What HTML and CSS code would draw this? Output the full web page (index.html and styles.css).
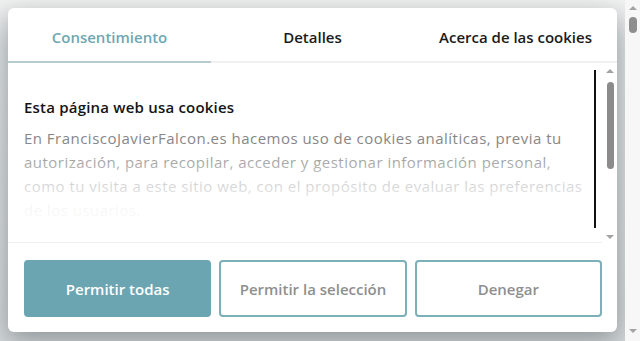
FILE: index.html
```html
<!DOCTYPE html>
<html lang="es">
<head>
<meta charset="utf-8">
<title>Cookies</title>
<link rel="stylesheet" href="styles.css">
</head>
<body>
<div class="stage">
  <div class="modal">
    <div class="tabs">
      <div class="tab active">Consentimiento</div>
      <div class="tab">Detalles</div>
      <div class="tab">Acerca de las cookies</div>
    </div>
    <div class="content">
      <div class="scroll">
        <div class="text">
          <h2 class="title">Esta página web usa cookies</h2>
          <p class="body">En FranciscoJavierFalcon.es hacemos uso de cookies analíticas, previa tu autorización, para recopilar, acceder y gestionar información personal, como tu visita a este sitio web, con el propósito de evaluar las preferencias de los usuarios.</p>
        </div>
        <div class="fade"></div>
        <div class="focusline"></div>
      </div>
      <div class="vbar">
        <span class="arrow up"></span>
        <span class="thumb"></span>
        <span class="spacer"></span>
        <span class="arrow down"></span>
      </div>
    </div>
    <div class="actions">
      <button class="btn primary">Permitir todas</button>
      <button class="btn outline">Permitir la selección</button>
      <button class="btn outline">Denegar</button>
    </div>
  </div>
</div>
<div class="pagebar">
  <span class="arrow up"></span>
  <span class="pthumb"></span>
  <span class="spacer"></span>
  <span class="arrow down"></span>
</div>
</body>
</html>
```

FILE: styles.css
```css
* { box-sizing: border-box; }
html, body { margin: 0; height: 341px; overflow: hidden; }
body {
  display: flex;
  font-family: "Open Sans", "Noto Sans", sans-serif;
  background: #f6f6f6;
}
.stage {
  flex: 1;
  padding: 8px;
  background: linear-gradient(to bottom, #f2f2f2 0, #dde1e3 50px, #d3d7d9 100%);
}
.modal {
  width: 609px;
  height: 324px;
  background: #fff;
  border-radius: 6px;
  box-shadow: 0 8px 26px rgba(30, 40, 45, 0.38);
  display: flex;
  flex-direction: column;
  overflow: hidden;
}
.tabs {
  display: flex;
  height: 55px;
  flex: none;
}
.tab {
  flex: 1;
  display: flex;
  align-items: center;
  justify-content: center;
  padding-top: 4px;
  font-size: 15px;
  line-height: 24px;
  font-weight: 600;
  color: #1b1b1b;
  border-bottom: 2px solid #f0f0f0;
}
.tab.active {
  color: #70a7b2;
  border-bottom-color: #b5cbd0;
}
.content {
  height: 180px;
  flex: none;
  display: flex;
}
.scroll {
  flex: 1;
  position: relative;
  display: flex;
  overflow: hidden;
  border-bottom: 1px solid #efefef;
}
.text {
  flex: 1;
  padding: 32px 0 0 16px;
}
.title {
  margin: 0 0 7px;
  font-size: 15px;
  line-height: 24px;
  font-weight: 600;
  letter-spacing: 0.2px;
  color: #141414;
}
.body {
  margin: 0;
  font-size: 15px;
  line-height: 24px;
  letter-spacing: 0.48px;
  color: #878787;
  width: 568px;
}
.fade {
  position: absolute;
  left: 0;
  right: 0;
  bottom: 0;
  height: 95px;
  background: linear-gradient(to bottom, rgba(255,255,255,0) 0, rgba(255,255,255,0.6) 35%, rgba(255,255,255,0.93) 65%, #fff 100%);
}
.focusline {
  position: relative;
  flex: none;
  width: 2px;
  margin: 7px 6px 14px 0;
  background: #111;
}
.vbar {
  width: 15px;
  flex: none;
  display: flex;
  flex-direction: column;
  align-items: center;
  padding: 6px 0 4px 1px;
}
.arrow {
  width: 0;
  height: 0;
  border-left: 4px solid transparent;
  border-right: 4px solid transparent;
  flex: none;
}
.arrow.up { border-bottom: 4px solid #a3a3a3; }
.arrow.down { border-top: 4px solid #a3a3a3; }
.thumb {
  width: 7px;
  height: 87px;
  margin-top: 9px;
  border-radius: 4px;
  background: #8b8b8b;
  flex: none;
}
.spacer { flex: 1; }
.actions {
  flex: 1;
  display: flex;
  gap: 8px;
  padding: 17px 15px 15px 16px;
}
.btn {
  flex: 1;
  height: 57px;
  border-radius: 4px;
  font-family: "Open Sans", "Noto Sans", sans-serif;
  font-size: 15px;
  line-height: 24px;
  font-weight: 600;
  cursor: pointer;
}
.btn.primary {
  background: #6ca5b2;
  border: 2px solid #6ca5b2;
  color: #fff;
}
.btn.outline {
  background: #fff;
  border: 2px solid #7cafb8;
  color: #8f8f8f;
}
.pagebar {
  width: 15px;
  flex: none;
  display: flex;
  flex-direction: column;
  align-items: center;
  padding: 6px 0 8px;
  background: #f7f7f7;
}
.pthumb {
  width: 8px;
  height: 16px;
  margin-top: 7px;
  border-radius: 4px;
  background: #8e8e8e;
  flex: none;
}
```
